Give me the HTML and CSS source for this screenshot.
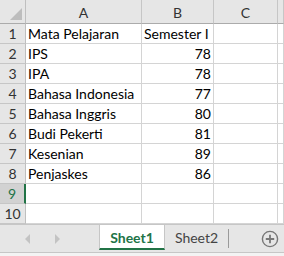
FILE: index.html
```html
<!DOCTYPE html>
<html lang="id">

<head>
  <meta charset="UTF-8">
  <title>Nilai</title>
  <link rel="stylesheet" href="styles.css">
</head>

<body>
  <div class="sheet">
    <div class="grid">
      <div class="corner"><span class="tri"></span></div>
      <div class="colhead">A</div>
      <div class="colhead">B</div>
      <div class="colhead">C</div>
      <div class="colhead"></div>

      <div class="rowhead">1</div>
      <div class="cell">Mata Pelajaran</div>
      <div class="cell">Semester I</div>
      <div class="cell"></div>
      <div class="cell"></div>

      <div class="rowhead">2</div>
      <div class="cell">IPS</div>
      <div class="cell num">78</div>
      <div class="cell"></div>
      <div class="cell"></div>

      <div class="rowhead">3</div>
      <div class="cell">IPA</div>
      <div class="cell num">78</div>
      <div class="cell"></div>
      <div class="cell"></div>

      <div class="rowhead">4</div>
      <div class="cell">Bahasa Indonesia</div>
      <div class="cell num">77</div>
      <div class="cell"></div>
      <div class="cell"></div>

      <div class="rowhead">5</div>
      <div class="cell">Bahasa Inggris</div>
      <div class="cell num">80</div>
      <div class="cell"></div>
      <div class="cell"></div>

      <div class="rowhead">6</div>
      <div class="cell">Budi Pekerti</div>
      <div class="cell num">81</div>
      <div class="cell"></div>
      <div class="cell"></div>

      <div class="rowhead">7</div>
      <div class="cell">Kesenian</div>
      <div class="cell num">89</div>
      <div class="cell"></div>
      <div class="cell"></div>

      <div class="rowhead">8</div>
      <div class="cell">Penjaskes</div>
      <div class="cell num">86</div>
      <div class="cell"></div>
      <div class="cell"></div>

      <div class="rowhead selected">9</div>
      <div class="cell"></div>
      <div class="cell"></div>
      <div class="cell"></div>
      <div class="cell"></div>

      <div class="rowhead">10</div>
      <div class="cell"></div>
      <div class="cell"></div>
      <div class="cell"></div>
      <div class="cell"></div>
    </div>

    <div class="tabs">
      <div class="nav">
        <svg width="8" height="10" viewBox="0 0 8 10"><polygon points="6,0 6,10 1,5" fill="#c3c3c3"/></svg>
        <svg width="8" height="10" viewBox="0 0 8 10"><polygon points="2,0 2,10 7,5" fill="#c3c3c3"/></svg>
      </div>
      <div class="tab active">Sheet1</div>
      <div class="tab">Sheet2</div>
      <span class="sep"></span>
      <div class="add">
        <svg width="18" height="18" viewBox="0 0 18 18">
          <circle cx="9" cy="9" r="7.6" fill="none" stroke="#777" stroke-width="1.4"/>
          <path d="M9 4.8v8.4M4.8 9h8.4" stroke="#777" stroke-width="1.8"/>
        </svg>
      </div>
    </div>
    <div class="footer"></div>
  </div>
</body>

</html>
```

FILE: styles.css
```css
* {
  box-sizing: border-box;
  margin: 0;
  padding: 0;
}

body {
  width: 284px;
  height: 256px;
  overflow: hidden;
  background-color: #fff;
  font-family: Lato, "Liberation Sans", sans-serif;
  font-size: 14px;
  color: #000;
}

.grid {
  display: grid;
  grid-template-columns: 26px 116px 72px 64px 1fr;
  grid-template-rows: 24px repeat(10, 20px);
}

.corner,
.colhead,
.rowhead {
  background-color: #e6e6e6;
  color: #333;
}

.corner {
  position: relative;
  border-right: 1px solid #bfbfbf;
  border-bottom: 1px solid #ababab;
}

.corner .tri {
  position: absolute;
  right: 3px;
  bottom: 3px;
  width: 0;
  height: 0;
  border-left: 12px solid transparent;
  border-bottom: 12px solid #bdbdbd;
}

.colhead {
  display: flex;
  align-items: center;
  justify-content: center;
  border-right: 1px solid #c6c6c6;
  border-bottom: 1px solid #ababab;
  padding-top: 1px;
}

.rowhead {
  display: flex;
  align-items: flex-end;
  justify-content: center;
  padding-bottom: 1px;
  border-right: 1px solid #bfbfbf;
  border-bottom: 1px solid #c6c6c6;
}

.rowhead.selected {
  background-color: #d2d2d2;
  color: #217346;
  border-right: 2px solid #217346;
}

.cell {
  display: flex;
  align-items: flex-end;
  padding: 0 2px 1px;
  white-space: nowrap;
  border-right: 1px solid #d4d4d4;
  border-bottom: 1px solid #d4d4d4;
}

.cell.num {
  justify-content: flex-end;
}

.tabs {
  display: flex;
  align-items: flex-start;
  height: 29px;
  background-color: #e6e6e6;
  border-top: 1px solid #c6c6c6;
  border-bottom: 1px solid #c6c6c6;
}

.nav {
  width: 99px;
  height: 27px;
  display: flex;
  align-items: center;
  padding-left: 24px;
  gap: 21px;
}

.tab {
  width: 63px;
  height: 25px;
  display: flex;
  align-items: center;
  justify-content: center;
  color: #444;
  font-size: 14px;
}

.tab.active {
  width: 66px;
  background-color: #fff;
  border-left: 1px solid #c6c6c6;
  border-right: 1px solid #c6c6c6;
  border-bottom: 2px solid #217346;
  color: #217346;
  font-weight: bold;
  padding-top: 1px;
}

.sep {
  width: 1px;
  height: 19px;
  margin-top: 4px;
  background-color: #9a9a9a;
}

.add {
  margin-left: auto;
  margin-right: 5px;
  margin-top: 5px;
  display: flex;
}

.footer {
  height: 3px;
  background-color: #f3f3f3;
}
```
